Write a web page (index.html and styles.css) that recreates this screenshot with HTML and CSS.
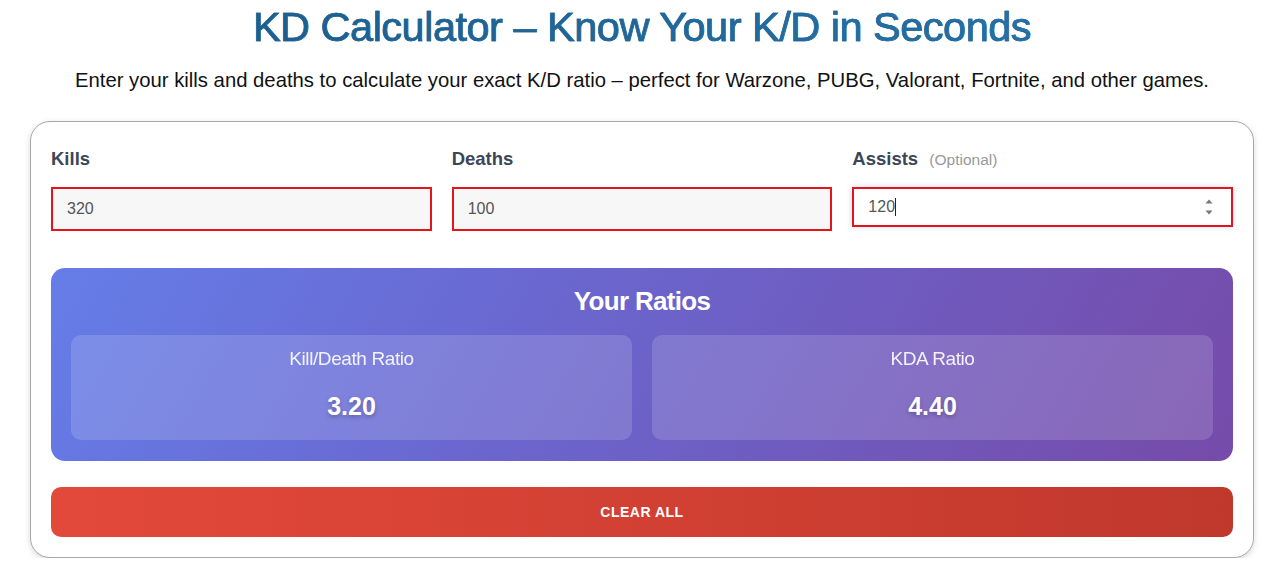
FILE: index.html
```html
<!DOCTYPE html>
<html lang="en">
<head>
    <meta charset="UTF-8">
    <meta name="viewport" content="width=device-width, initial-scale=1.0">
    <title>KD Calculator</title>
    <link rel="stylesheet" href="styles.css">
</head>
<body>
    <div class="page">
        <h1 class="title">KD Calculator – Know Your K/D in Seconds</h1>
        <p class="intro">Enter your kills and deaths to calculate your exact K/D ratio – perfect for Warzone, PUBG, Valorant, Fortnite, and other games.</p>

        <div class="calculator">
            <div class="fields">
                <div class="field">
                    <label for="kills">Kills</label>
                    <input type="number" id="kills" value="320">
                </div>
                <div class="field">
                    <label for="deaths">Deaths</label>
                    <input type="number" id="deaths" value="100">
                </div>
                <div class="field">
                    <label for="assists">Assists <span class="optional">(Optional)</span></label>
                    <div class="input-focus">
                        <span class="typed">120</span><span class="caret"></span>
                        <svg class="spinner" width="12" height="22" viewBox="0 0 12 22">
                            <path d="M2.5 7.5 L6 3.5 L9.5 7.5 Z" fill="#777"/>
                            <path d="M2.5 14.5 L6 18.5 L9.5 14.5 Z" fill="#777"/>
                        </svg>
                    </div>
                </div>
            </div>

            <div class="results">
                <h3>Your Ratios</h3>
                <div class="ratio-grid">
                    <div class="ratio-card">
                        <div class="ratio-label">Kill/Death Ratio</div>
                        <div class="ratio-value" id="kd">3.20</div>
                    </div>
                    <div class="ratio-card">
                        <div class="ratio-label">KDA Ratio</div>
                        <div class="ratio-value" id="kda">4.40</div>
                    </div>
                </div>
            </div>

            <button class="clear-btn">Clear All</button>
        </div>
    </div>
</body>
</html>
```

FILE: styles.css
```css
body {
    margin: 0;
    font-family: 'Liberation Sans', Arial, sans-serif;
    background: #fff;
    color: #222;
}
.page {
    padding: 0 26px 0 30px;
}
.title {
    margin: 0;
    padding-top: 3px;
    text-align: center;
    font-size: 41.5px;
    font-weight: normal;
    line-height: 48px;
    letter-spacing: -0.5px;
    background: linear-gradient(to right, #1a5a86, #2676ae);
    -webkit-background-clip: text;
    background-clip: text;
    color: transparent;
    -webkit-text-stroke: 0.6px #1d6296;
}
.intro {
    margin: 17px 0 0;
    text-align: center;
    font-size: 20.3px;
    line-height: 24px;
    color: #111;
}
.calculator {
    margin-top: 29px;
    border: 1px solid #a8a8a8;
    border-radius: 20px;
    padding: 20px;
    box-shadow: 0 2px 6px rgba(0, 0, 0, 0.15);
    background: #fff;
}
.fields {
    display: grid;
    grid-template-columns: repeat(3, 1fr);
    gap: 20px;
}
.field label {
    display: block;
    margin-top: 3px;
    margin-bottom: 15px;
    font-size: 18.5px;
    font-weight: bold;
    line-height: 27px;
    color: #3b4656;
}
.optional {
    font-size: 15.5px;
    font-weight: normal;
    color: #999;
    margin-left: 6px;
}
.field input {
    box-sizing: border-box;
    width: 100%;
    height: 44px;
    padding: 0 14px;
    border: 2px solid #e3141b;
    background: #f7f7f7;
    font-family: 'Liberation Sans', Arial, sans-serif;
    font-size: 16px;
    color: #555;
    outline: none;
}
.field input::-webkit-inner-spin-button,
.field input::-webkit-outer-spin-button {
    -webkit-appearance: none;
    margin: 0;
}
.input-focus {
    box-sizing: border-box;
    display: flex;
    align-items: center;
    height: 40px;
    margin-top: -1px;
    padding: 0 14px;
    border: 2px solid #e3141b;
    background: #fff;
    box-shadow: 0 0 6px rgba(52, 120, 200, 0.25);
    font-size: 16px;
    color: #555;
}
.caret {
    width: 1px;
    height: 18px;
    background: #222;
}
.spinner {
    margin-left: auto;
    margin-right: 2px;
}
.results {
    margin-top: 37px;
    padding: 16px 20px 21px;
    border-radius: 14px;
    background: linear-gradient(120deg, #657de8 0%, #6a67cf 40%, #764ba9 100%);
    color: #fff;
    text-align: center;
}
.results h3 {
    margin: 0 0 16px;
    font-size: 26px;
    line-height: 35px;
    letter-spacing: -0.7px;
}
.ratio-grid {
    display: grid;
    grid-template-columns: 1fr 1fr;
    gap: 20px;
}
.ratio-card {
    background: rgba(255, 255, 255, 0.15);
    border-radius: 10px;
    padding: 13px 15px 19px;
}
.ratio-label {
    font-size: 19px;
    line-height: 22px;
    opacity: 0.9;
    letter-spacing: -0.4px;
}
.ratio-value {
    margin-top: 21px;
    font-size: 25px;
    font-weight: bold;
    line-height: 30px;
    text-shadow: 0 2px 4px rgba(0, 0, 0, 0.25);
}
.clear-btn {
    display: block;
    width: 100%;
    height: 50px;
    margin-top: 26px;
    border: none;
    border-radius: 10px;
    background: linear-gradient(to right, #e3493a, #c0382c);
    color: #fff;
    font-family: 'Liberation Sans', Arial, sans-serif;
    font-size: 14px;
    font-weight: bold;
    text-transform: uppercase;
    letter-spacing: 0.5px;
    cursor: pointer;
}
```
